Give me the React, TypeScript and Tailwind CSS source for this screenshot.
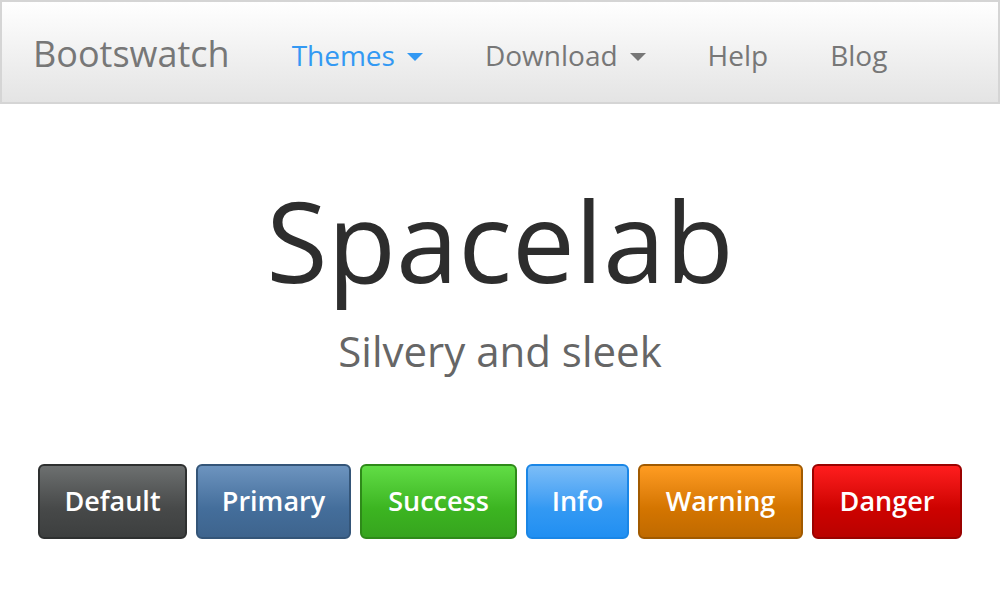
const navItems = [
  { label: 'Themes', caret: true, active: true },
  { label: 'Download', caret: true, active: false },
  { label: 'Help', caret: false, active: false },
  { label: 'Blog', caret: false, active: false },
];

const buttons = [
  { label: 'Default', w: 'w-[149px]', cls: 'from-[#6d7070] via-[#474949] to-[#3d3f3f] border-[#2e3030]' },
  { label: 'Primary', w: 'w-[155px]', cls: 'from-[#6d94bf] via-[#446e9b] to-[#3e648d] border-[#345578]' },
  { label: 'Success', w: 'w-[157px]', cls: 'from-[#61dd45] via-[#3cb521] to-[#36a41e] border-[#2e8a19]' },
  { label: 'Info', w: 'w-[103px]', cls: 'from-[#7bbdf7] via-[#3399f3] to-[#208ff2] border-[#1a86e6]' },
  { label: 'Warning', w: 'w-[165px]', cls: 'from-[#ff9c21] via-[#d47500] to-[#c06a00] border-[#a15a00]' },
  { label: 'Danger', w: 'w-[150px]', cls: 'from-[#ff1d1d] via-[#cd0200] to-[#b90200] border-[#9a0200]' },
];

function Caret({ color }: { color: string }) {
  return (
    <svg width="16" height="8" viewBox="0 0 16 8" className="ml-3 mt-1">
      <path d="M0 0 L16 0 L8 8 Z" fill={color} />
    </svg>
  );
}

export default function App() {
  return (
    <div className="w-[1000px] h-[600px] bg-white overflow-hidden" style={{ fontFamily: '"Open Sans", sans-serif' }}>
      {/* Navbar */}
      <nav className="h-[104px] border-2 border-[#d5d5d5] bg-gradient-to-b from-white to-[#e4e4e4] flex items-center pt-[5px]">
        <div className="pl-[31px] pr-[31px] text-[36px] text-[#777777] leading-none -mt-[2px]">Bootswatch</div>
        {navItems.map((item) => (
          <div
            key={item.label}
            className={`flex items-center px-[31px] text-[28px] leading-none ${item.active ? 'text-[#3399f3]' : 'text-[#777777]'}`}
          >
            <span>{item.label}</span>
            {item.caret && <Caret color={item.active ? '#3399f3' : '#777777'} />}
          </div>
        ))}
      </nav>

      {/* Hero */}
      <div className="flex flex-col items-center">
        <h1 className="mt-[80px] text-[112px] leading-none text-[#2d2d2d]">Spacelab</h1>
        <p className="mt-[34px] text-[42px] leading-none text-[#666666]">Silvery and sleek</p>

        <div className="mt-[92px] flex gap-[9px]">
          {buttons.map((b) => (
            <div
              key={b.label}
              className={`${b.w} h-[75px] rounded-[6px] border-2 flex items-center justify-center text-white text-[27px] font-semibold bg-gradient-to-b via-60% ${b.cls}`}
            >
              {b.label}
            </div>
          ))}
        </div>
      </div>
    </div>
  );
}
